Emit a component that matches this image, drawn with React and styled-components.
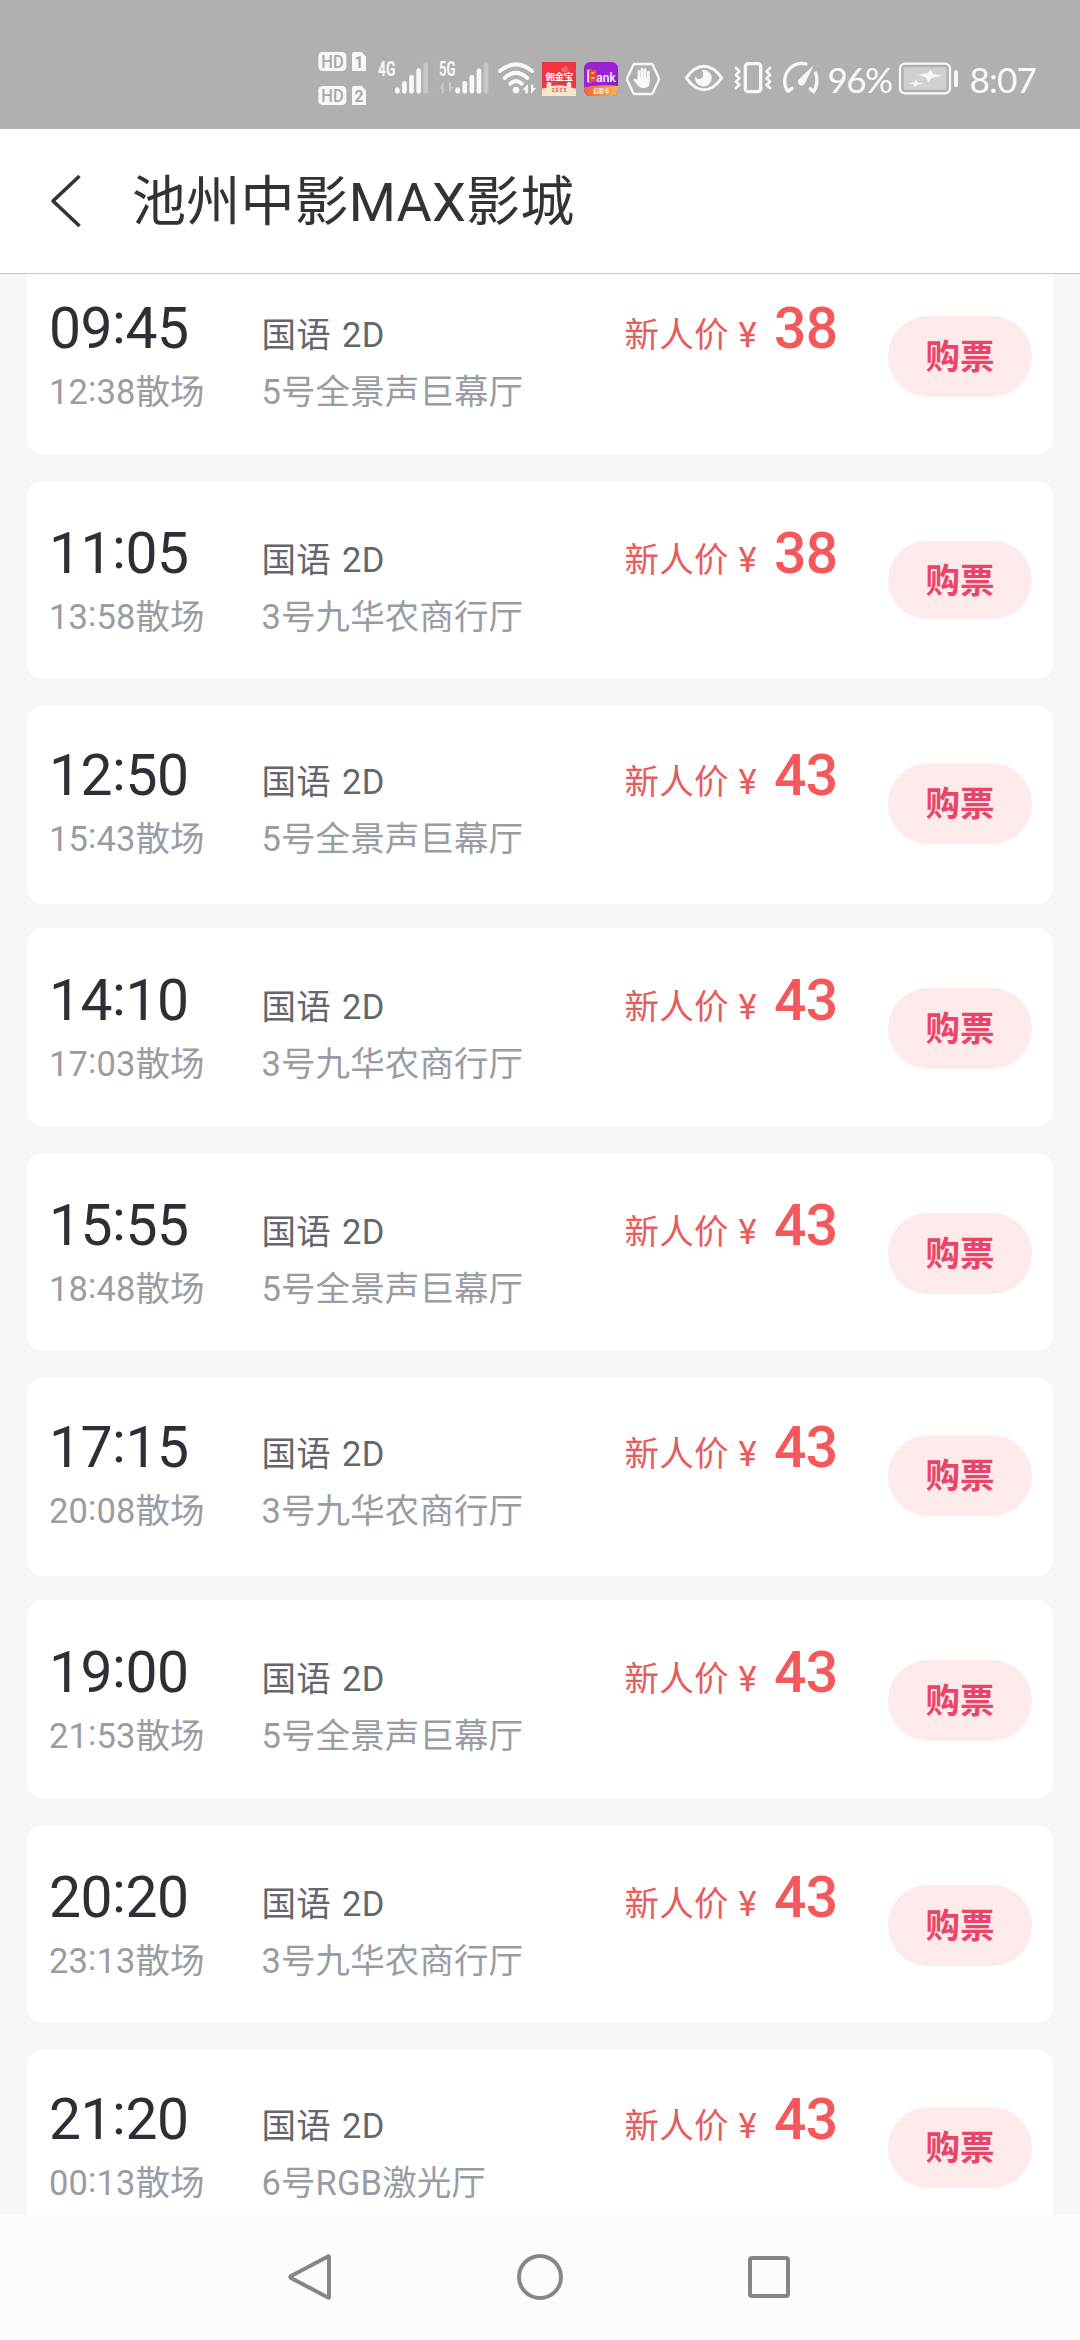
import React from "react";
import styled, { createGlobalStyle } from "styled-components";

const GlobalStyle = createGlobalStyle`
  * { box-sizing: border-box; }
  body {
    margin: 0;
    background: #f4f6f8;
    font-family: Roboto, "Noto Sans CJK SC", sans-serif;
  }
`;

const Screen = styled.div`
  width: 1080px;
  height: 2340px;
  display: flex;
  flex-direction: column;
  overflow: hidden;
  background: #f4f6f8;
`;

/* ---------- status bar ---------- */

const StatusBar = styled.div`
  height: 129px;
  flex: none;
  display: flex;
  align-items: flex-start;
  padding: 50px 0 0 318px;
  background: #b0b0b0;
`;

const StatusIcon = styled.svg`
  display: block;
  flex: none;
  height: 60px;
  width: ${(p) => p.$w}px;
  margin-left: ${(p) => p.$gap || 0}px;
  overflow: visible;
`;

const StatusText = styled.span`
  font-family: Lato, sans-serif;
  font-size: 35px;
  line-height: 59px;
  width: ${(p) => p.$w}px;
  margin-left: ${(p) => p.$gap}px;
  letter-spacing: ${(p) => p.$spacing}px;
  white-space: nowrap;
  color: #fafafa;
`;

const INK = "#f8f8f8";

function HdBadges() {
  return (
    <StatusIcon $w={49} viewBox="54 60 147 180">
      {[66, 168].map((y, i) => (
        <g key={y}>
          <rect x="55" y={y} width="84" height="57" rx="13" fill={INK} />
          <text x="64" y={y + 48} fontSize="54" fontWeight="500" fill="#a8a8a8" textLength="67" lengthAdjust="spacingAndGlyphs">HD</text>
          <path d={`M161 ${y}h24l13 14v43h-42v-51q0-6 5-6z`} fill={INK} />
          <text x="177" y={y + 49} fontSize="47" fontWeight="700" fill="#a8a8a8" textAnchor="middle">{i + 1}</text>
        </g>
      ))}
    </StatusIcon>
  );
}

function Signal({ label, gap, busy }) {
  const base = busy ? 49 : 51;
  return (
    <StatusIcon $w={51} $gap={gap} viewBox="0 60 153 180">
      <text x="0" y="139" fontSize="58" fontWeight="700" fill={INK} textLength={base + 1} lengthAdjust="spacingAndGlyphs">{label}</text>
      {busy && <path d="M0 176 14 156v34H8v-14zM44 171 30 190v-34h6v15z" fill="#c9c9c9" />}
      {[172, 153, 134, 115, 97].map((y, i) => (
        <rect key={y} x={base + i * 21.3} y={y} width="14" height={191 - y} rx="7" fill={i === 4 ? "#c8c8c8" : INK} />
      ))}
    </StatusIcon>
  );
}

function Wifi({ gap }) {
  return (
    <StatusIcon $w={38} $gap={gap} viewBox="594 60 114 180">
      <g fill="none" stroke={INK} strokeWidth="12" strokeLinecap="round">
        <path d="M600 123Q648 83 696 123" />
        <path d="M614 144Q648 113 682 144" />
        <path d="M631 161Q648 146 665 161" />
      </g>
      <circle cx="648" cy="180" r="10" fill={INK} />
      <path d="M667 179 684 163v27h-8v-11zM708 174 693 191v-27h7v10z" fill={INK} />
    </StatusIcon>
  );
}

function RedApp({ gap }) {
  return (
    <StatusIcon $w={34} $gap={gap} viewBox="726 60 102 180">
      <rect x="726" y="96" width="102" height="102" fill="#ee3541" />
      <path d="M784 115q10-10 20-4l-3 16h-15z" fill="#f0685f" />
      <path d="M740 172v-12q8-10 14 0v9q23-7 46 0v-9q7-10 14 0v12z" fill="#f9e6d6" />
      <path d="M726 176q51-18 102 0v22H726z" fill="#fbe6cd" />
      <text x="736" y="149" fontSize="29" fontWeight="700" fontFamily='"Noto Sans CJK SC", sans-serif' fill="#fff" textLength="84">佣金宝</text>
      <text x="755" y="187" fontSize="15" fontWeight="700" fill="#e0474a" textLength="44">2023</text>
    </StatusIcon>
  );
}

function BankApp({ gap }) {
  return (
    <StatusIcon $w={34} $gap={gap} viewBox="852 60 102 180">
      <defs>
        <linearGradient id="bankBody" x1="0" y1="0" x2="1" y2="1">
          <stop offset="0" stopColor="#8a2bc4" />
          <stop offset="0.5" stopColor="#9c1fdc" />
          <stop offset="1" stopColor="#7a20c0" />
        </linearGradient>
        <linearGradient id="bankBase" x1="0" y1="0" x2="1" y2="0">
          <stop offset="0" stopColor="#f0663a" />
          <stop offset="1" stopColor="#f8b04a" />
        </linearGradient>
        <clipPath id="bankClip"><rect x="852" y="96" width="102" height="102" rx="19" /></clipPath>
      </defs>
      <g clipPath="url(#bankClip)">
        <rect x="852" y="96" width="102" height="102" fill="url(#bankBody)" />
        <path d="M852 172q51-10 102-4v30H852z" fill="url(#bankBase)" />
      </g>
      <path d="M862 119h13v38h-13z" fill="#f4f0fa" />
      <path d="M867 119h21q7 8 0 16 7 10 0 21h-21z" fill="#ee4733" />
      <path d="M874 127h9v4h-9zM874 141h9v5h-9z" fill="#ffd5bd" />
      <text x="889" y="156" fontSize="39" fontWeight="500" fill="#fff" textLength="58" lengthAdjust="spacingAndGlyphs">ank</text>
      <text x="880" y="189" fontSize="16" fontWeight="700" fontFamily='"Noto Sans CJK SC", sans-serif' fill="#fff" textLength="48">幻彩卡</text>
    </StatusIcon>
  );
}

function HandHex({ gap }) {
  return (
    <StatusIcon $w={34} $gap={gap} viewBox="978 60 102 180">
      <path d="M1004 102h50q3 0 4 2l18 39q2 4 0 8l-18 39q-1 2-4 2h-50q-3 0-4-2l-18-39q-2-4 0-8l18-39q1-2 4-2z" fill="none" stroke={INK} strokeWidth="7" strokeLinejoin="round" />
      <g stroke={INK} strokeWidth="8" strokeLinecap="round">
        <path d="M1017 124v28M1026 118v30M1035 119v30M1045 126v26M1005 150l10 12" />
      </g>
      <path d="M1013 143h36v14q0 17-16 17h-6q-7 0-12-7l-8-12z" fill={INK} />
    </StatusIcon>
  );
}

function Eye({ gap }) {
  return (
    <StatusIcon $w={38} $gap={gap} viewBox="75 60 114 180">
      <path d="M79 144q24-35 53-35t53 35q-24 35-53 35t-53-35z" fill="none" stroke={INK} strokeWidth="9" strokeLinejoin="round" />
      <path d="M126 120a25 25 0 1 1-20 18q4 11 14 9 15-6 6-27z" fill={INK} />
    </StatusIcon>
  );
}

function Vibrate({ gap }) {
  return (
    <StatusIcon $w={38} $gap={gap} viewBox="222 60 114 180">
      <g fill="none" stroke={INK} strokeWidth="10" strokeLinejoin="round" strokeLinecap="round">
        <rect x="256" y="101" width="46" height="84" rx="9" />
        <path strokeWidth="8" d="M228 114l10 10-10 11 10 10-10 10 10 10-10 9M330 114l-10 10 10 11-10 10 10 10-10 10 10 9" />
      </g>
    </StatusIcon>
  );
}

function Gauge({ gap }) {
  return (
    <StatusIcon $w={36} $gap={gap} viewBox="369 60 108 180">
      <g fill="none" stroke={INK} strokeWidth="10" strokeLinecap="round" strokeLinejoin="round">
        <path d="M438 102q-22-6-40 6-24 18-24 45 0 18 10 31l12-9" />
        <path d="M467 129q10 30-6 56l-10-9" />
      </g>
      <path d="M461 106l-26 54a11 11 0 1 1-18-12z" fill={INK} />
    </StatusIcon>
  );
}

function Battery({ gap }) {
  return (
    <StatusIcon $w={59} $gap={gap} viewBox="717 60 177 180">
      <rect x="720" y="101" width="150" height="89" rx="15" fill="none" stroke={INK} strokeWidth="7" />
      <rect x="731" y="112" width="128" height="67" rx="5" fill="#d0d0d0" />
      <rect x="882" y="121" width="12" height="50" rx="5" fill={INK} />
      <path d="M774 134l29-5 9-10 9 14 25 3-32 9-9 13-8-16zM743 159l19-1 5-9 7 9 17 2-20 5-6 7-5-9z" fill={INK} />
    </StatusIcon>
  );
}

/* ---------- header ---------- */

const Header = styled.header`
  height: 145px;
  flex: none;
  display: flex;
  align-items: center;
  padding-left: 49px;
  background: #fff;
  border-bottom: 1px solid #c4c6c8;
`;

const BackIcon = styled.svg`
  width: 34px;
  height: 54px;
  flex: none;
`;

const Title = styled.h1`
  margin: 3px 0 0 49px;
  font-size: 54px;
  line-height: 72px;
  font-weight: 400;
  letter-spacing: 0.2px;
  color: #333;
  white-space: nowrap;
`;

/* ---------- showtime list ---------- */

const List = styled.main`
  flex: 1;
  min-height: 0;
  display: flex;
  flex-direction: column;
  overflow: hidden;
  padding: 0 27px;
`;

const Card = styled.article`
  flex: none;
  height: 198px;
  margin-top: ${(p) => p.$gap}px;
  padding: ${(p) => (p.$raised ? 34 : 37)}px 21px 0 22px;
  display: flex;
  align-items: flex-start;
  background: #fff;
  border-radius: 16px;
`;

const Details = styled.div`
  flex: 1;
  display: grid;
  grid-template-columns: 212.5px 363px 1fr;
  grid-template-rows: 72px 48px;
  row-gap: 3px;
  align-items: start;
  white-space: nowrap;
`;

const StartTime = styled.div`
  font-size: 57px;
  line-height: 72px;
  letter-spacing: -0.5px;
  color: #2c2e38;
`;

const Colon = styled.span`
  position: relative;
  top: -0.09em;
`;

const Label = styled.div`
  font-size: 34.5px;
  line-height: 48px;
  letter-spacing: 0.1px;
  color: #9a9ca4;
`;

const Format = styled(Label)`
  padding-top: 18px;
  word-spacing: 2px;
  letter-spacing: 0.3px;
  color: #63666d;
`;

const Price = styled.div`
  display: flex;
  align-items: flex-start;
  color: #e85b5b;
`;

const PriceTag = styled.span`
  padding-top: 18px;
  font-size: 34.5px;
  line-height: 48px;
  letter-spacing: 0.2px;
`;

const Yen = styled.span`
  margin-left: 10px;
`;

const Amount = styled.strong`
  margin-left: 17px;
  font-size: 57px;
  line-height: 72px;
  font-weight: 500;
  letter-spacing: -0.6px;
  color: #f5575b;
`;

const BuyButton = styled.button`
  flex: none;
  width: 144px;
  height: ${(p) => p.$h}px;
  margin: 23px 0 0;
  padding: 0 0 5px;
  border: 0;
  border-radius: 41px;
  background: #fdeaea;
  color: #ea4468;
  font-family: "Noto Sans CJK SC", sans-serif;
  font-size: 34.5px;
  line-height: 48px;
  font-weight: 700;
`;

/* ---------- navigation bar ---------- */

const NavBar = styled.nav`
  height: 126px;
  flex: none;
  display: flex;
  justify-content: center;
  align-items: center;
  gap: 181px;
  background: #fcfcfc;
`;

const NavIcon = styled.svg`
  width: 48px;
  height: 48px;
  fill: none;
  stroke: #868686;
  stroke-width: 4;
  stroke-linejoin: round;
`;

const HALLS = {
  giant: "5号全景声巨幕厅",
  bank: "3号九华农商行厅",
  laser: "6号RGB激光厅",
};

const SHOWS = [
  { start: "09:45", end: "12:38", hall: HALLS.giant, price: 38, gap: -18 },
  { start: "11:05", end: "13:58", hall: HALLS.bank, price: 38, gap: 27, buttonHeight: 78 },
  { start: "12:50", end: "15:43", hall: HALLS.giant, price: 43, gap: 27, raised: true },
  { start: "14:10", end: "17:03", hall: HALLS.bank, price: 43, gap: 24 },
  { start: "15:55", end: "18:48", hall: HALLS.giant, price: 43, gap: 27 },
  { start: "17:15", end: "20:08", hall: HALLS.bank, price: 43, gap: 27, raised: true },
  { start: "19:00", end: "21:53", hall: HALLS.giant, price: 43, gap: 24 },
  { start: "20:20", end: "23:13", hall: HALLS.bank, price: 43, gap: 27 },
  { start: "21:20", end: "00:13", hall: HALLS.laser, price: 43, gap: 27, raised: true },
];

function Clock({ value }) {
  const [hours, minutes] = value.split(":");
  return (
    <>
      {hours}
      <Colon>:</Colon>
      {minutes}
    </>
  );
}

function ShowCard({ show }) {
  return (
    <Card $gap={show.gap} $raised={show.raised}>
      <Details>
        <StartTime><Clock value={show.start} /></StartTime>
        <Format>国语 2D</Format>
        <Price>
          <PriceTag>新人价<Yen>¥</Yen></PriceTag>
          <Amount>{show.price}</Amount>
        </Price>
        <Label><Clock value={show.end} />散场</Label>
        <Label>{show.hall}</Label>
      </Details>
      <BuyButton $h={show.buttonHeight || 81}>购票</BuyButton>
    </Card>
  );
}

export default function App() {
  return (
    <Screen>
      <GlobalStyle />
      <StatusBar>
        <HdBadges />
        <Signal label="4G" gap={10.5} />
        <Signal label="5G" gap={10.5} busy />
        <Wifi gap={7.5} />
        <RedApp gap={6} />
        <BankApp gap={8} />
        <HandHex gap={8} />
        <Eye gap={25} />
        <Vibrate gap={11} />
        <Gauge gap={11} />
        <StatusText $w={64} $gap={9} $spacing={-1.5}>96%</StatusText>
        <Battery gap={7} />
        <StatusText $w={66} $gap={12} $spacing={-0.8}>8:07</StatusText>
      </StatusBar>
      <Header>
        <BackIcon viewBox="0 0 34 54" fill="none" stroke="#333" strokeWidth="3.6">
          <path d="M30.5 2 4 27 30.5 52" strokeLinejoin="round" />
        </BackIcon>
        <Title>池州中影MAX影城</Title>
      </Header>
      <List>
        {SHOWS.map((show) => (
          <ShowCard key={show.start} show={show} />
        ))}
      </List>
      <NavBar>
        <NavIcon viewBox="0 0 48 48"><path d="M42 4v40q0 1-1 .5L4 25q-1.500-1 0-2L41 3.500q1-.5 1 .5z" /></NavIcon>
        <NavIcon viewBox="0 0 48 48"><circle cx="24" cy="24" r="21" /></NavIcon>
        <NavIcon viewBox="0 0 48 48"><rect x="5" y="5" width="38" height="38" rx="2" /></NavIcon>
      </NavBar>
    </Screen>
  );
}
